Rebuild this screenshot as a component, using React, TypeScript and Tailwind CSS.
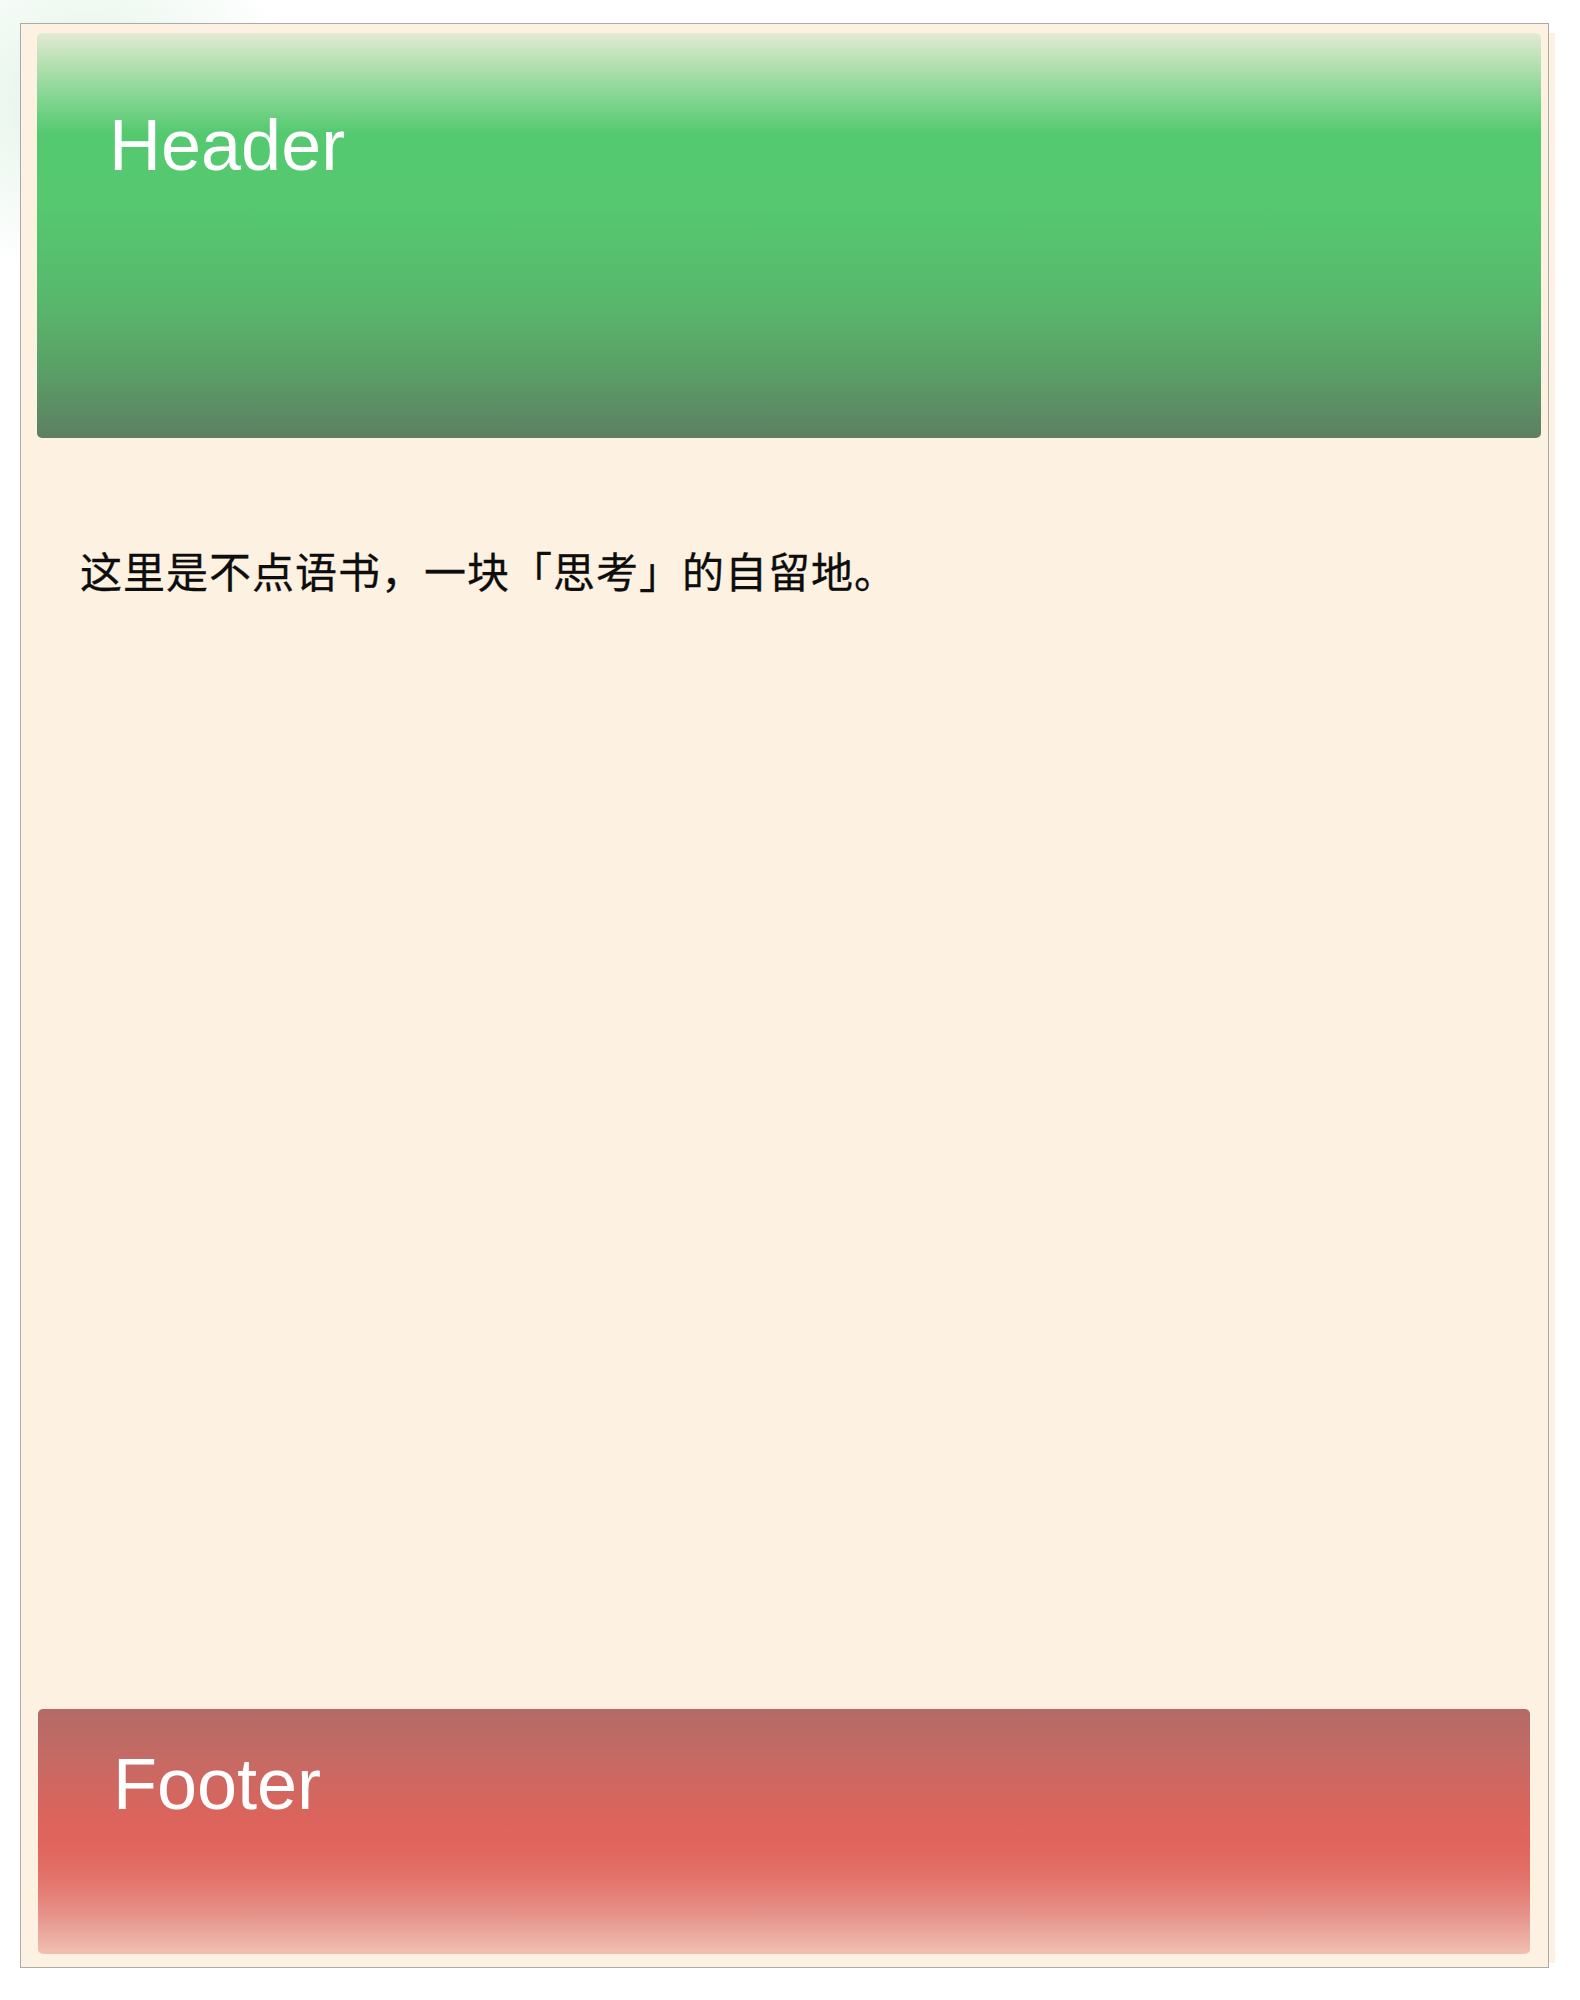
import React from "react";

export default function App() {
  return (
    <div className="relative min-h-[2000px] w-[1580px] bg-white overflow-hidden">
      <div className="pointer-events-none absolute left-[-120px] top-[-80px] h-[360px] w-[420px] rounded-full bg-[radial-gradient(closest-side,rgba(120,200,140,0.24),rgba(120,200,140,0.09)_60%,rgba(120,200,140,0))]" />
      <div className="relative ml-[20px] mt-[23px] flex h-[1945px] w-[1529px] flex-col border border-[#ababab] bg-[#fdf1e1]">
        <div className="pointer-events-none absolute right-[-7px] top-[9px] bottom-[4px] w-[6px] bg-[#fdf1e1]" />
        <header className="ml-[16px] mt-[9px] h-[405px] w-[1504px] rounded-[5px] bg-[linear-gradient(to_bottom,#e3ead4_0px,#b3e0b0_32px,#7cd48c_70px,#55c970_100px,#55c870_175px,#58b76c_270px,#5a9e66_340px,#5d7f62_405px)] pl-[72px] pt-[76px]">
          <h1 className="font-['Liberation_Sans',Arial,sans-serif] text-[72px] leading-none text-white">Header</h1>
        </header>
        <p className="ml-[59px] mt-[111px] font-['Noto_Sans_CJK_SC','Noto_Sans',sans-serif] text-[42px] font-normal tracking-[1px] leading-none text-[#0d0d0d] [-webkit-text-stroke:0.3px_#0d0d0d]">
          这里是不点语书，一块「思考」的自留地。
        </p>
        <div className="flex-1" />
        <footer className="mb-[13px] ml-[17px] h-[245px] w-[1492px] rounded-[5px] bg-[linear-gradient(to_bottom,#b46a67_0px,#c66a64_50px,#dc645c_110px,#e0645c_135px,#e2736b_170px,#e6928a_205px,#f0c0b2_245px)] pl-[75px] pt-[39px]">
          <h2 className="font-['Liberation_Sans',Arial,sans-serif] text-[72px] leading-none text-white">Footer</h2>
        </footer>
      </div>
    </div>
  );
}
